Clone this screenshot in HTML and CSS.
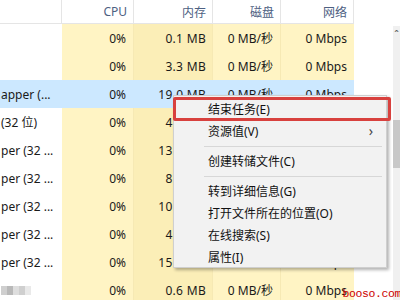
FILE: index.html
```html
<!DOCTYPE html>
<html lang="zh-CN">

<head>
  <meta charset="UTF-8">
  <title>任务管理器</title>
  <link rel="stylesheet" href="styles.css">
</head>

<body>

  <div class="app">
    <div class="table">
      <div class="row head">
        <div class="cell name"></div>
        <div class="cell">CPU</div>
        <div class="cell">内存</div>
        <div class="cell">磁盘</div>
        <div class="cell">网络</div>
      </div>

      <div class="row">
        <div class="cell name"></div>
        <div class="cell cpu">0%</div>
        <div class="cell mem">0.1 MB</div>
        <div class="cell disk">0 MB/秒</div>
        <div class="cell net">0 Mbps</div>
      </div>
      <div class="row">
        <div class="cell name"></div>
        <div class="cell cpu">0%</div>
        <div class="cell mem">3.3 MB</div>
        <div class="cell disk">0 MB/秒</div>
        <div class="cell net">0 Mbps</div>
      </div>
      <div class="row selected">
        <div class="cell name">apper (...</div>
        <div class="cell cpu">0%</div>
        <div class="cell mem">19.0 MB</div>
        <div class="cell disk">0 MB/秒</div>
        <div class="cell net">0 Mbps</div>
      </div>
      <div class="row">
        <div class="cell name">(32 位)</div>
        <div class="cell cpu">0%</div>
        <div class="cell mem">4.5 MB</div>
        <div class="cell disk">0 MB/秒</div>
        <div class="cell net">0 Mbps</div>
      </div>
      <div class="row">
        <div class="cell name">per (32 ...</div>
        <div class="cell cpu">0%</div>
        <div class="cell mem">13.0 MB</div>
        <div class="cell disk">0 MB/秒</div>
        <div class="cell net">0 Mbps</div>
      </div>
      <div class="row">
        <div class="cell name">per (32 ...</div>
        <div class="cell cpu">0%</div>
        <div class="cell mem">8.4 MB</div>
        <div class="cell disk">0 MB/秒</div>
        <div class="cell net">0 Mbps</div>
      </div>
      <div class="row">
        <div class="cell name">per (32 ...</div>
        <div class="cell cpu">0%</div>
        <div class="cell mem">10.1 MB</div>
        <div class="cell disk">0 MB/秒</div>
        <div class="cell net">0 Mbps</div>
      </div>
      <div class="row">
        <div class="cell name">per (32 ...</div>
        <div class="cell cpu">0%</div>
        <div class="cell mem">4.6 MB</div>
        <div class="cell disk">0 MB/秒</div>
        <div class="cell net">0 Mbps</div>
      </div>
      <div class="row">
        <div class="cell name">per (32 ...</div>
        <div class="cell cpu">0%</div>
        <div class="cell mem">15.7 MB</div>
        <div class="cell disk">0 MB/秒</div>
        <div class="cell net">0 Mbps</div>
      </div>
      <div class="row">
        <div class="cell name">
          <span class="blur">
            <i class="px a"></i><i class="px b"></i><i class="px c"></i><i class="px a"></i><i class="px d"></i>
          </span>
        </div>
        <div class="cell cpu">0%</div>
        <div class="cell mem">0.6 MB</div>
        <div class="cell disk">0 MB/秒</div>
        <div class="cell net">0 Mbps</div>
      </div>
    </div>

    <div class="gutter"></div>

    <div class="scrollbar">
      <div class="arrow">&#710;</div>
      <div class="thumb"></div>
    </div>
  </div>

  <!-- context menu on the selected row -->
  <div class="menu">
    <div class="mark"></div>
    <div class="item">结束任务(E)</div>
    <div class="item">资源值(V)<span class="sub">&#8250;</span></div>
    <div class="sep"></div>
    <div class="item">创建转储文件(C)</div>
    <div class="sep"></div>
    <div class="item">转到详细信息(G)</div>
    <div class="item">打开文件所在的位置(O)</div>
    <div class="item">在线搜索(S)</div>
    <div class="item">属性(I)</div>
  </div>

  <div class="watermark">booso.com</div>

</body>

</html>
```

FILE: styles.css
```css
body {
  margin: 0;
  width: 400px;
  height: 300px;
  overflow: hidden;
  background: #fff;
  font-family: 'Noto Sans', 'Noto Sans CJK SC', sans-serif;
  font-size: 12px;
  color: #1a1a1a;
  position: relative;
}

.app {
  display: flex;
  height: 300px;
}

.table {
  width: 354px;
  flex: none;
}

.row {
  display: grid;
  grid-template-columns: 62px 72px 79px 68px 73px;
  height: 28px;
}

.cell {
  display: flex;
  align-items: center;
  justify-content: flex-end;
  padding-right: 7px;
  white-space: nowrap;
  overflow: hidden;
}

.cell.name {
  justify-content: flex-start;
  padding: 0 0 0 1px;
}

.head {
  height: 24px;
  border-bottom: 1px solid #e5e5e5;
  box-sizing: border-box;
}

.head .cell {
  color: #4d6082;
  border-right: 1px solid #e5e5e5;
  padding-right: 6px;
}

.cpu,
.disk,
.net {
  background: #fff4c4;
}

.mem {
  background: #fbeeb7;
  padding-right: 6px;
  letter-spacing: 0.3px;
}

.cpu,
.mem,
.disk {
  border-right: 1px solid #f6e9b4;
}

.selected .cell {
  background: #cce8ff;
  border-color: #cce8ff;
}

.blur {
  display: flex;
  opacity: 0.8;
}

.px {
  width: 6px;
  height: 9px;
}

.px.a { background: #c4c4c4; }
.px.b { background: #a8a8a8; }
.px.c { background: #d6d6d6; }
.px.d { background: #e4e4e4; }

.gutter {
  width: 39px;
  flex: none;
}

.scrollbar {
  width: 7px;
  margin-top: 26px;
  background: #f0f0f0;
  display: flex;
  flex-direction: column;
}

.arrow {
  height: 14px;
  line-height: 18px;
  font-size: 11px;
  color: #606060;
  text-align: center;
}

.thumb {
  margin-top: 80px;
  height: 48px;
  background: #c8c8c8;
}

.menu {
  position: absolute;
  left: 173px;
  top: 95px;
  width: 214px;
  height: 173px;
  box-sizing: border-box;
  padding-top: 2px;
  background: #f2f2f2;
  border: 1px solid #cfcfcf;
  box-shadow: 2px 2px 3px rgba(0, 0, 0, 0.3);
  color: #111;
}

.item {
  height: 22px;
  display: flex;
  align-items: center;
  padding-left: 34px;
  position: relative;
}

.sub {
  position: absolute;
  right: 13px;
  top: 1px;
  font-size: 14px;
  color: #444;
}

.sep {
  height: 8px;
  margin-left: 30px;
  margin-right: 4px;
  background: linear-gradient(#d7d7d7, #d7d7d7) center / 100% 1px no-repeat;
}

.mark {
  position: absolute;
  left: -1px;
  top: 1px;
  width: 218px;
  height: 24px;
  box-sizing: border-box;
  border: 3px solid #d8413e;
  border-radius: 2px;
}

.watermark {
  position: absolute;
  right: -1px;
  bottom: 0;
  font-family: 'Liberation Mono', monospace;
  font-size: 11.5px;
  color: #cc0000;
  letter-spacing: -0.4px;
}
```
